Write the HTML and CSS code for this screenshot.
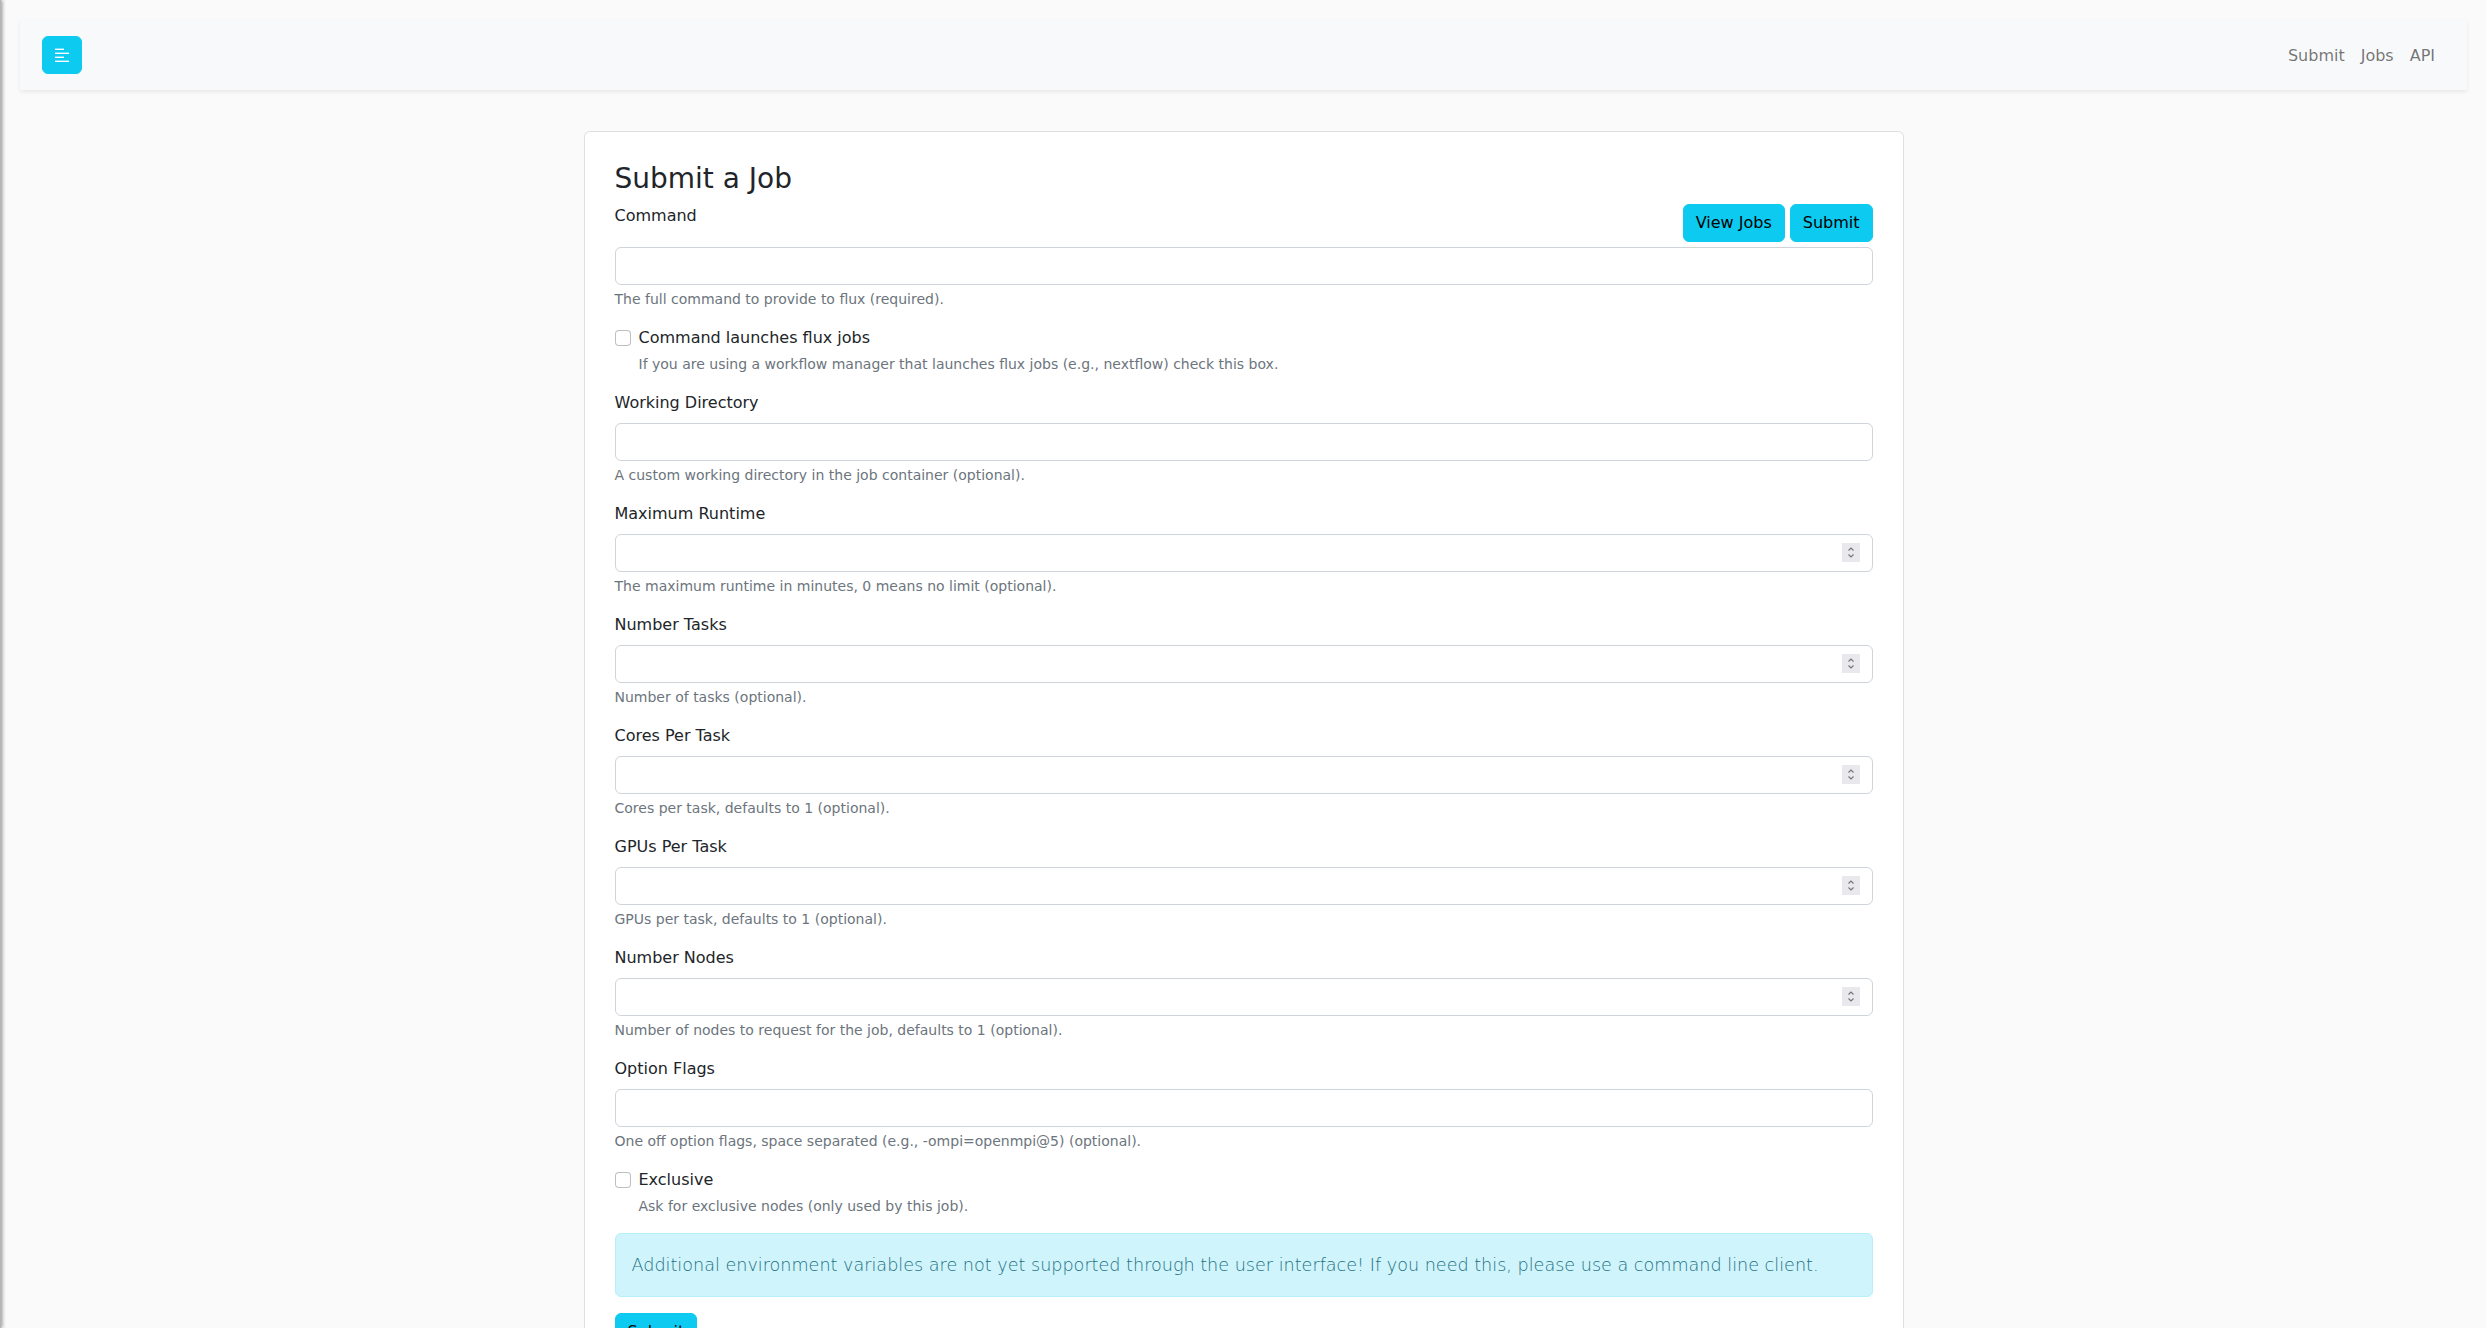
FILE: index.html
```html
<!DOCTYPE html>
<html lang="en">
<head>
<meta charset="utf-8">
<title>Submit a Job</title>
<link rel="stylesheet" href="styles.css">
</head>
<body>
<div class="sidebar"></div>
<div class="wrapper">
  <nav class="navbar">
    <button class="btn btn-info toggle" type="button" aria-label="Toggle sidebar">
      <svg width="14" height="14" viewBox="0 0 14 14" aria-hidden="true">
        <rect x="0" y="0.6" width="9" height="1.4" fill="#fff"/>
        <rect x="0" y="4.6" width="14" height="1.4" fill="#fff"/>
        <rect x="0" y="8.6" width="9" height="1.4" fill="#fff"/>
        <rect x="0" y="12.6" width="14" height="1.4" fill="#fff"/>
      </svg>
    </button>
    <ul class="nav-links">
      <li><a href="#">Submit</a></li>
      <li><a href="#">Jobs</a></li>
      <li><a href="#">API</a></li>
    </ul>
  </nav>

  <main class="container">
    <div class="card">
      <h3 class="title">Submit a Job</h3>
      <form>
        <div class="head-row">
          <label class="form-label" for="command">Command</label>
          <div class="head-buttons">
            <a class="btn btn-info" href="#">View Jobs</a>
            <button class="btn btn-info" type="submit">Submit</button>
          </div>
        </div>
        <div class="group">
          <input class="form-control" id="command" type="text">
          <div class="form-text">The full command to provide to flux (required).</div>
        </div>

        <div class="group form-check">
          <input class="check" type="checkbox" id="workflow">
          <label class="check-label" for="workflow">Command launches flux jobs</label>
          <div class="form-text">If you are using a workflow manager that launches flux jobs (e.g., nextflow) check this box.</div>
        </div>

        <div class="group">
          <label class="form-label" for="workdir">Working Directory</label>
          <input class="form-control" id="workdir" type="text">
          <div class="form-text">A custom working directory in the job container (optional).</div>
        </div>

        <div class="group">
          <label class="form-label" for="runtime">Maximum Runtime</label>
          <input class="form-control" id="runtime" type="number">
          <div class="form-text">The maximum runtime in minutes, 0 means no limit (optional).</div>
        </div>

        <div class="group">
          <label class="form-label" for="tasks">Number Tasks</label>
          <input class="form-control" id="tasks" type="number">
          <div class="form-text">Number of tasks (optional).</div>
        </div>

        <div class="group">
          <label class="form-label" for="cores">Cores Per Task</label>
          <input class="form-control" id="cores" type="number">
          <div class="form-text">Cores per task, defaults to 1 (optional).</div>
        </div>

        <div class="group">
          <label class="form-label" for="gpus">GPUs Per Task</label>
          <input class="form-control" id="gpus" type="number">
          <div class="form-text">GPUs per task, defaults to 1 (optional).</div>
        </div>

        <div class="group">
          <label class="form-label" for="nodes">Number Nodes</label>
          <input class="form-control" id="nodes" type="number">
          <div class="form-text">Number of nodes to request for the job, defaults to 1 (optional).</div>
        </div>

        <div class="group">
          <label class="form-label" for="flags">Option Flags</label>
          <input class="form-control" id="flags" type="text">
          <div class="form-text">One off option flags, space separated (e.g., -ompi=openmpi@5) (optional).</div>
        </div>

        <div class="group form-check">
          <input class="check" type="checkbox" id="exclusive">
          <label class="check-label" for="exclusive">Exclusive</label>
          <div class="form-text">Ask for exclusive nodes (only used by this job).</div>
        </div>

        <div class="alert">Additional environment variables are not yet supported through the user interface! If you need this, please use a command line client.</div>

        <button class="btn btn-info" type="submit">Submit</button>
      </form>
    </div>
  </main>
</div>
</body>
</html>
```
FILE: styles.css
```css
* {
  box-sizing: border-box;
}

html, body {
  margin: 0;
  padding: 0;
}

body {
  background: #fafafa;
  font-family: "DejaVu Sans", sans-serif;
  font-size: 16px;
  line-height: 1.5;
  color: #212529;
}

.sidebar {
  position: fixed;
  top: 0;
  bottom: 0;
  left: -250px;
  width: 251px;
  background: #b5b5b5;
  box-shadow: 1px 0 4px rgba(0, 0, 0, 0.45);
}

.wrapper {
  padding: 20px 19px 0 20px;
}

.navbar {
  height: 70px;
  display: flex;
  align-items: center;
  justify-content: space-between;
  padding: 0 24px 0 22px;
  background: #f8f9fa;
  box-shadow: 0 0.125rem 0.25rem rgba(0, 0, 0, 0.075);
}

.btn {
  display: inline-block;
  font-family: inherit;
  font-size: 16px;
  line-height: 24px;
  padding: 6px 12px;
  border: 1px solid transparent;
  border-radius: 6px;
  text-decoration: none;
  cursor: pointer;
  vertical-align: middle;
}

.btn-info {
  background: #0dcaf0;
  border-color: #0dcaf0;
  color: #000;
}

.toggle {
  width: 40px;
  height: 38px;
  padding: 0;
  display: flex;
  align-items: center;
  justify-content: center;
}

.toggle svg {
  display: block;
}

.nav-links {
  list-style: none;
  margin: 0;
  padding: 0;
  display: flex;
}

.nav-links a {
  display: block;
  padding: 9px 8px 7px;
  color: rgba(0, 0, 0, 0.55);
  text-decoration: none;
}

.container {
  width: 1320px;
  margin: 41px auto 0;
}

.card {
  background: #fff;
  border: 1px solid rgba(0, 0, 0, 0.125);
  border-radius: 6px;
  padding: 30px 30px 40px;
}

.title {
  margin: 0 0 8px;
  font-size: 28px;
  font-weight: 500;
  line-height: 1.2;
}

.head-row {
  display: flex;
  justify-content: space-between;
  align-items: flex-start;
  margin-bottom: 5px;
}

.head-row .form-label {
  margin-bottom: 0;
}

.head-buttons {
  display: flex;
  gap: 5px;
}

.group {
  margin-bottom: 16px;
}

.form-label {
  display: block;
  margin-bottom: 8px;
}

.form-control {
  display: block;
  width: 100%;
  height: 38px;
  padding: 6px 12px;
  font-family: inherit;
  font-size: 16px;
  line-height: 24px;
  color: #212529;
  background: #fff;
  border: 1px solid #ced4da;
  border-radius: 6px;
}

.form-control::-webkit-inner-spin-button {
  -webkit-appearance: none;
  appearance: none;
  opacity: 1;
  width: 18px;
  height: 19px;
  margin: 0;
  background-color: #e9e9ed;
  background-image: url("data:image/svg+xml,%3Csvg xmlns='http://www.w3.org/2000/svg' width='18' height='19' viewBox='0 0 18 19'%3E%3Cpath d='M6.5 7.5 L9 5 L11.5 7.5 M6.5 11.5 L9 14 L11.5 11.5' fill='none' stroke='%23757575' stroke-width='1.1'/%3E%3C/svg%3E");
  background-repeat: no-repeat;
  background-position: center;
}

.form-control::-webkit-outer-spin-button {
  -webkit-appearance: none;
  margin: 0;
}

.form-text {
  margin-top: 4px;
  font-size: 14px;
  line-height: 21px;
  color: #6c757d;
}

.form-check {
  padding-left: 24px;
  min-height: 24px;
}

.check {
  float: left;
  margin: 4px 0 0 -24px;
  width: 16px;
  height: 16px;
  appearance: none;
  -webkit-appearance: none;
  background: #fff;
  border: 1px solid rgba(0, 0, 0, 0.25);
  border-radius: 4px;
}

.check-label {
  display: inline-block;
}

.alert {
  margin-bottom: 16px;
  padding: 16px;
  background: #cff4fc;
  border: 1px solid #b6effb;
  border-radius: 6px;
  color: #23707f;
  font-size: 17.6px;
  font-weight: 300;
  line-height: 30px;
  white-space: nowrap;
}
```
